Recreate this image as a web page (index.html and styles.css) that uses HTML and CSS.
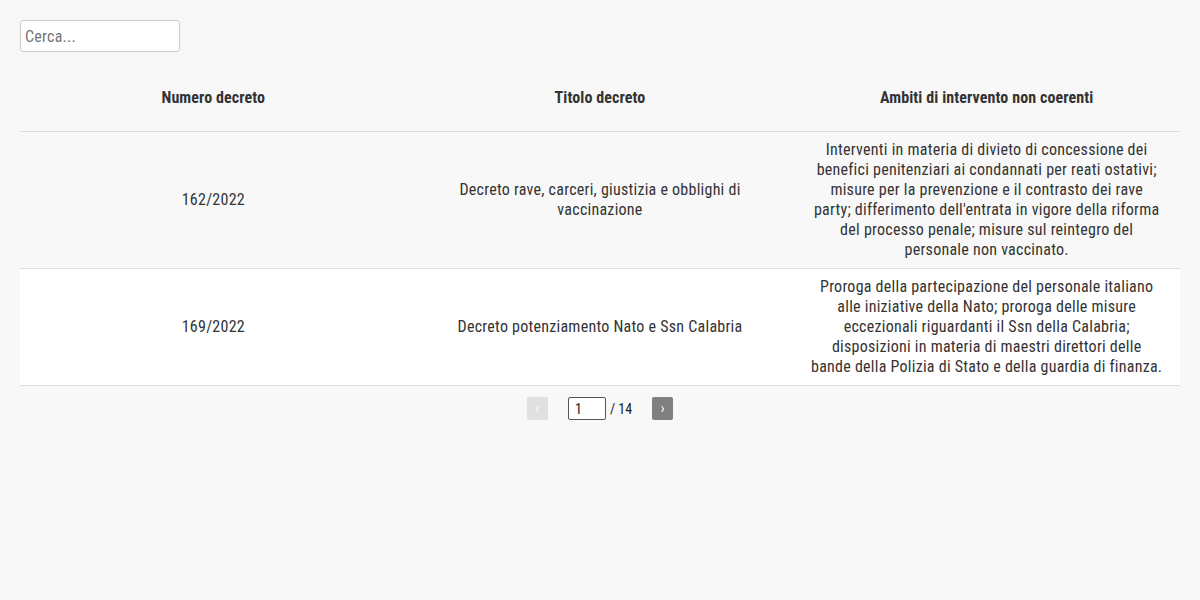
FILE: index.html
```html
<!DOCTYPE html>
<html lang="it">
<head>
<meta charset="utf-8">
<link rel="stylesheet" href="styles.css">
</head>
<body>
<div class="page">
  <input class="search" type="text" placeholder="Cerca...">
  <table class="grid">
    <thead>
      <tr><th>Numero decreto</th><th>Titolo decreto</th><th>Ambiti di intervento non coerenti</th></tr>
    </thead>
    <tbody>
      <tr class="odd">
        <td>162/2022</td>
        <td>Decreto rave, carceri, giustizia e obblighi di vaccinazione</td>
        <td>Interventi in materia di divieto di concessione dei benefici penitenziari ai condannati per reati ostativi; misure per la prevenzione e il contrasto dei rave party; differimento dell'entrata in vigore della riforma del processo penale; misure sul reintegro del personale non vaccinato.</td>
      </tr>
      <tr class="even">
        <td>169/2022</td>
        <td>Decreto potenziamento Nato e Ssn Calabria</td>
        <td>Proroga della partecipazione del personale italiano alle iniziative della Nato; proroga delle misure eccezionali riguardanti il Ssn della Calabria; disposizioni in materia di maestri direttori delle bande della Polizia di Stato e della guardia di finanza.</td>
      </tr>
    </tbody>
  </table>
  <div class="pager">
    <button class="pbtn disabled">‹</button>
    <input class="pinput" type="text" value="1">
    <span class="ptotal">/ 14</span>
    <button class="pbtn active">›</button>
  </div>
</div>
</body>
</html>
```
FILE: styles.css
```css
html, body {
  margin: 0;
  padding: 0;
  background: #f8f8f8;
}
body {
  font-family: "Roboto Condensed", Roboto, "Liberation Sans", sans-serif;
  font-stretch: condensed;
  letter-spacing: 0.25px;
  color: #333;
  font-size: 16px;
  line-height: 20px;
}
.page {
  padding: 20px;
}
.search {
  display: block;
  box-sizing: border-box;
  width: 160px;
  height: 32px;
  border: 1px solid #ccc;
  border-radius: 3px;
  background: #fff;
  padding: 0 4px;
  font: inherit;
  font-size: 16px;
  letter-spacing: 0.25px;
  color: #333;
  outline: none;
}
.search::placeholder {
  color: #757575;
}
.grid {
  width: 100%;
  margin-top: 13px;
  border-collapse: collapse;
  table-layout: fixed;
}
.grid th {
  font-weight: bold;
  letter-spacing: 0.1px;
  padding: 23px 17px;
  text-align: center;
  border-bottom: 1px solid #ddd;
}
.grid td {
  padding: 8px 17px;
  text-align: center;
  vertical-align: middle;
  border-bottom: 1px solid #ddd;
}
.grid tr.even td {
  background: #fff;
}
.pager {
  display: flex;
  justify-content: center;
  align-items: center;
  margin-top: 11px;
  gap: 4px;
  letter-spacing: 0;
}
.pbtn {
  width: 21px;
  height: 23px;
  border: none;
  border-radius: 2px;
  color: #fff;
  font: inherit;
  font-size: 14px;
  letter-spacing: 0;
  padding: 0;
  line-height: 23px;
}
.pbtn.disabled {
  background: #e0e0e0;
  margin-right: 16px;
}
.pbtn.active {
  background: #808080;
  margin-left: 16px;
}
.pinput {
  box-sizing: border-box;
  width: 38px;
  height: 23px;
  border: 1px solid #555;
  border-radius: 2px;
  padding: 0 6px;
  font: inherit;
  font-size: 14px;
  letter-spacing: 0;
  color: #222;
  background: #fff;
}
.ptotal {
  font-size: 14px;
  color: #222;
}
```
